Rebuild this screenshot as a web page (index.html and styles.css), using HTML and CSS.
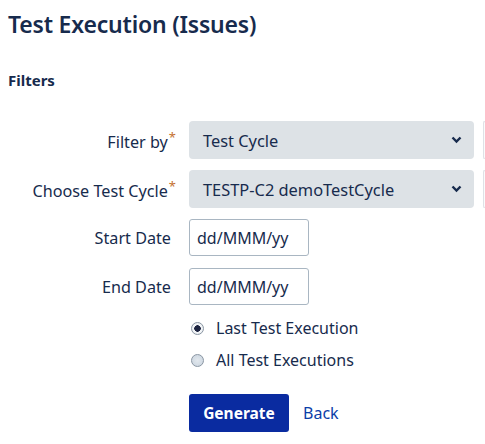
FILE: index.html
```html
<!DOCTYPE html>
<html>
<head>
<meta charset="utf-8">
<link rel="stylesheet" href="styles.css">
</head>
<body>
<div class="page">
  <h1 class="title">Test Execution (Issues)</h1>
  <h2 class="section">Filters</h2>
  <div class="form">
    <div class="row">
      <label class="label">Filter by<span class="req">*</span></label>
      <div class="field">
        <div class="select"><span>Test Cycle</span><svg class="chev" width="11" height="8" viewBox="0 0 11 8"><path d="M1.5 1.5 L5.5 5.5 L9.5 1.5" fill="none" stroke="#172b4d" stroke-width="2.4"/></svg></div>
        <div class="side"></div>
      </div>
    </div>
    <div class="row">
      <label class="label">Choose Test Cycle<span class="req">*</span></label>
      <div class="field">
        <div class="select"><span>TESTP-C2 demoTestCycle</span><svg class="chev" width="11" height="8" viewBox="0 0 11 8"><path d="M1.5 1.5 L5.5 5.5 L9.5 1.5" fill="none" stroke="#172b4d" stroke-width="2.4"/></svg></div>
        <div class="side"></div>
      </div>
    </div>
    <div class="row">
      <label class="label plain">Start Date</label>
      <div class="field"><div class="date">dd/MMM/yy</div></div>
    </div>
    <div class="row">
      <label class="label plain">End Date</label>
      <div class="field"><div class="date">dd/MMM/yy</div></div>
    </div>
    <div class="radios">
      <div class="radio-row"><span class="radio checked"></span><span>Last Test Execution</span></div>
      <div class="radio-row"><span class="radio"></span><span>All Test Executions</span></div>
    </div>
    <div class="actions">
      <button class="btn">Generate</button>
      <a class="back">Back</a>
    </div>
  </div>
</div>
</body>
</html>
```
FILE: styles.css
```css
html, body {
  margin: 0;
  padding: 0;
  background: #fff;
  overflow: hidden;
}
body {
  font-family: "Noto Sans", "Open Sans", sans-serif;
  color: #172b4d;
  width: 485px;
  height: 444px;
}
.page {
  padding: 0 0 0 8px;
}
.title {
  margin: 0;
  padding-top: 8px;
  font-size: 23px;
  font-weight: 600;
  line-height: 32px;
  color: #172b4d;
  letter-spacing: -0.2px;
}
.section {
  margin: 30px 0 0 0;
  font-size: 15px;
  font-weight: 700;
  line-height: 20px;
  color: #172b4d;
}
.form {
  margin-top: 31px;
}
.row {
  display: flex;
  align-items: center;
  height: 38px;
  margin-bottom: 11px;
}
.label {
  width: 170px;
  box-sizing: border-box;
  padding-right: 2px;
  text-align: right;
  font-size: 16.2px;
  color: #172b4d;
  white-space: nowrap;
  flex-shrink: 0;
}
.label.plain {
  padding-right: 7px;
}
.req {
  color: #c4702f;
  font-size: 13px;
  vertical-align: 6px;
  margin-left: 1px;
}
.field {
  display: flex;
  align-self: flex-start;
  gap: 9px;
  margin-left: 11px;
}
.select {
  width: 285px;
  height: 38px;
  box-sizing: border-box;
  background: #dde2e6;
  border-radius: 4px;
  display: flex;
  align-items: center;
  justify-content: space-between;
  padding: 0 12px 0 14px;
  font-size: 16.4px;
  color: #172b4d;
}
.chev {
  display: block;
}
.side {
  width: 2px;
  height: 38px;
  box-sizing: border-box;
  border-left: 1px solid #dfe1e6;
  border-top: 1px solid #dfe1e6;
  border-bottom: 1px solid #dfe1e6;
  border-radius: 3px 0 0 3px;
  background: #fafbfc;
  flex-shrink: 0;
}
.date {
  width: 120px;
  height: 37px;
  box-sizing: border-box;
  border: 1px solid #a9b6c2;
  border-radius: 3px;
  background: #fff;
  display: flex;
  align-items: center;
  padding-left: 7px;
  font-size: 16px;
  color: #172b4d;
}
.radios {
  margin-left: 181px;
  margin-top: 1px;
  display: flex;
  flex-direction: column;
  gap: 10px;
}
.radio-row {
  display: flex;
  align-items: center;
  gap: 12px;
  height: 22px;
  font-size: 16px;
  line-height: 22px;
  color: #172b4d;
}
.radio {
  width: 13px;
  height: 13px;
  box-sizing: border-box;
  border-radius: 50%;
  border: 1px solid #8a96a3;
  background: radial-gradient(circle, #e2e8ee 0%, #c9d3dd 100%);
  margin-left: 2px;
}
.radio.checked {
  background: radial-gradient(circle, #1d2440 0, #1d2440 3px, #f4f6f8 3.5px, #e4e8ec 100%);
}
.actions {
  margin-left: 181px;
  margin-top: 23px;
  display: flex;
  align-items: center;
  gap: 14px;
}
.btn {
  width: 100px;
  height: 38px;
  background: #0a2ba0;
  color: #fff;
  border: none;
  border-radius: 3px;
  font-family: "Noto Sans", "Open Sans", sans-serif;
  font-size: 15.5px;
  font-weight: 700;
  padding: 0;
}
.back {
  color: #0b3ea8;
  font-size: 16px;
}
```
